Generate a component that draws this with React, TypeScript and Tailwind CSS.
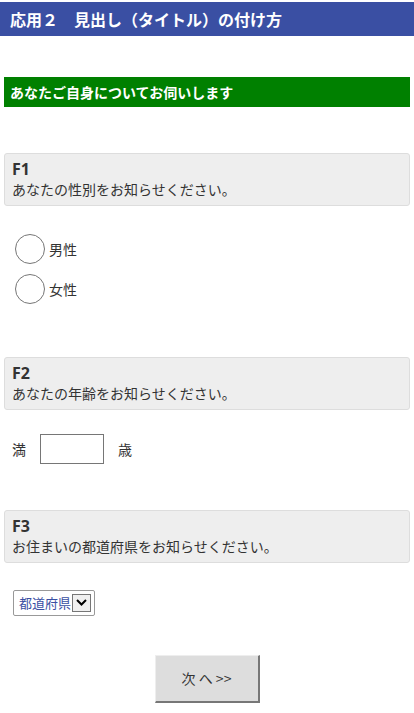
import React from "react";

const font = { fontFamily: '"Noto Sans CJK JP", "Noto Sans", sans-serif' };

function QBox({ id, text }: { id: string; text: string }) {
  return (
    <div className="mx-[4px] rounded-[3px] border border-[#dddddd] bg-[#eeeeee] px-[7px] pt-[5px] pb-[6px] text-[#333333]">
      <div className="text-[16px] font-bold leading-[20px]" style={{ fontFamily: '"Open Sans", "Noto Sans CJK JP", sans-serif' }}>{id}</div>
      <div className="text-[14px] leading-[20px]">{text}</div>
    </div>
  );
}

function Radio({ label }: { label: string }) {
  return (
    <label className="flex items-center gap-[4px]">
      <span className="block h-[30px] w-[30px] rounded-full border border-[#767676] bg-white" />
      <span className="text-[14px] text-[#333333]">{label}</span>
    </label>
  );
}

export default function App() {
  return (
    <div className="min-h-[713px] bg-white pt-[2px]" style={font}>
      <div className="flex h-[34px] items-center bg-[#3a4fa3] px-[10px] text-[16px] font-bold text-white">
        応用２　見出し（タイトル）の付け方
      </div>
      <div className="mx-[4px] mt-[41px] flex h-[30px] items-center bg-[#008000] px-[6px] text-[14px] font-bold text-white">
        あなたご自身についてお伺いします
      </div>

      <div className="mt-[46px]">
        <QBox id="F1" text="あなたの性別をお知らせください。" />
      </div>
      <div className="mt-[28px] flex flex-col gap-[10px] pl-[15px]">
        <Radio label="男性" />
        <Radio label="女性" />
      </div>

      <div className="mt-[53px]">
        <QBox id="F2" text="あなたの年齢をお知らせください。" />
      </div>
      <div className="mt-[24px] flex items-center pl-[12px] text-[14px] text-[#333333]">
        <span>満</span>
        <span className="ml-[14px] block h-[30px] w-[64px] border border-[#767676] bg-white" />
        <span className="ml-[14px]">歳</span>
      </div>

      <div className="mt-[46px]">
        <QBox id="F3" text="お住まいの都道府県をお知らせください。" />
      </div>
      <div className="mt-[26px] pl-[13px]">
        <div className="inline-flex h-[26px] w-[82px] items-center rounded-[2px] border border-[#999999] bg-white pl-[5px] text-[13px] text-[#3a4fa3]">
          <span>都道府県</span>
          <span className="ml-[1px] flex h-[18px] w-[19px] items-center justify-center border border-[#767676] bg-[#f0f0f0]">
            <svg width="11" height="7" viewBox="0 0 11 7">
              <path d="M1 1 L5.5 5.5 L10 1" stroke="#000" strokeWidth="2" fill="none" />
            </svg>
          </span>
        </div>
      </div>

      <div className="mt-[39px] flex justify-center">
        <button className="h-[48px] w-[105px] border-t border-l border-t-[#eeeeee] border-l-[#eeeeee] border-b-[2px] border-r-[2px] border-b-[#777777] border-r-[#777777] bg-[#dddddd] text-[14px] text-[#333333]" style={font}>
          次 へ &gt;&gt;
        </button>
      </div>
    </div>
  );
}
